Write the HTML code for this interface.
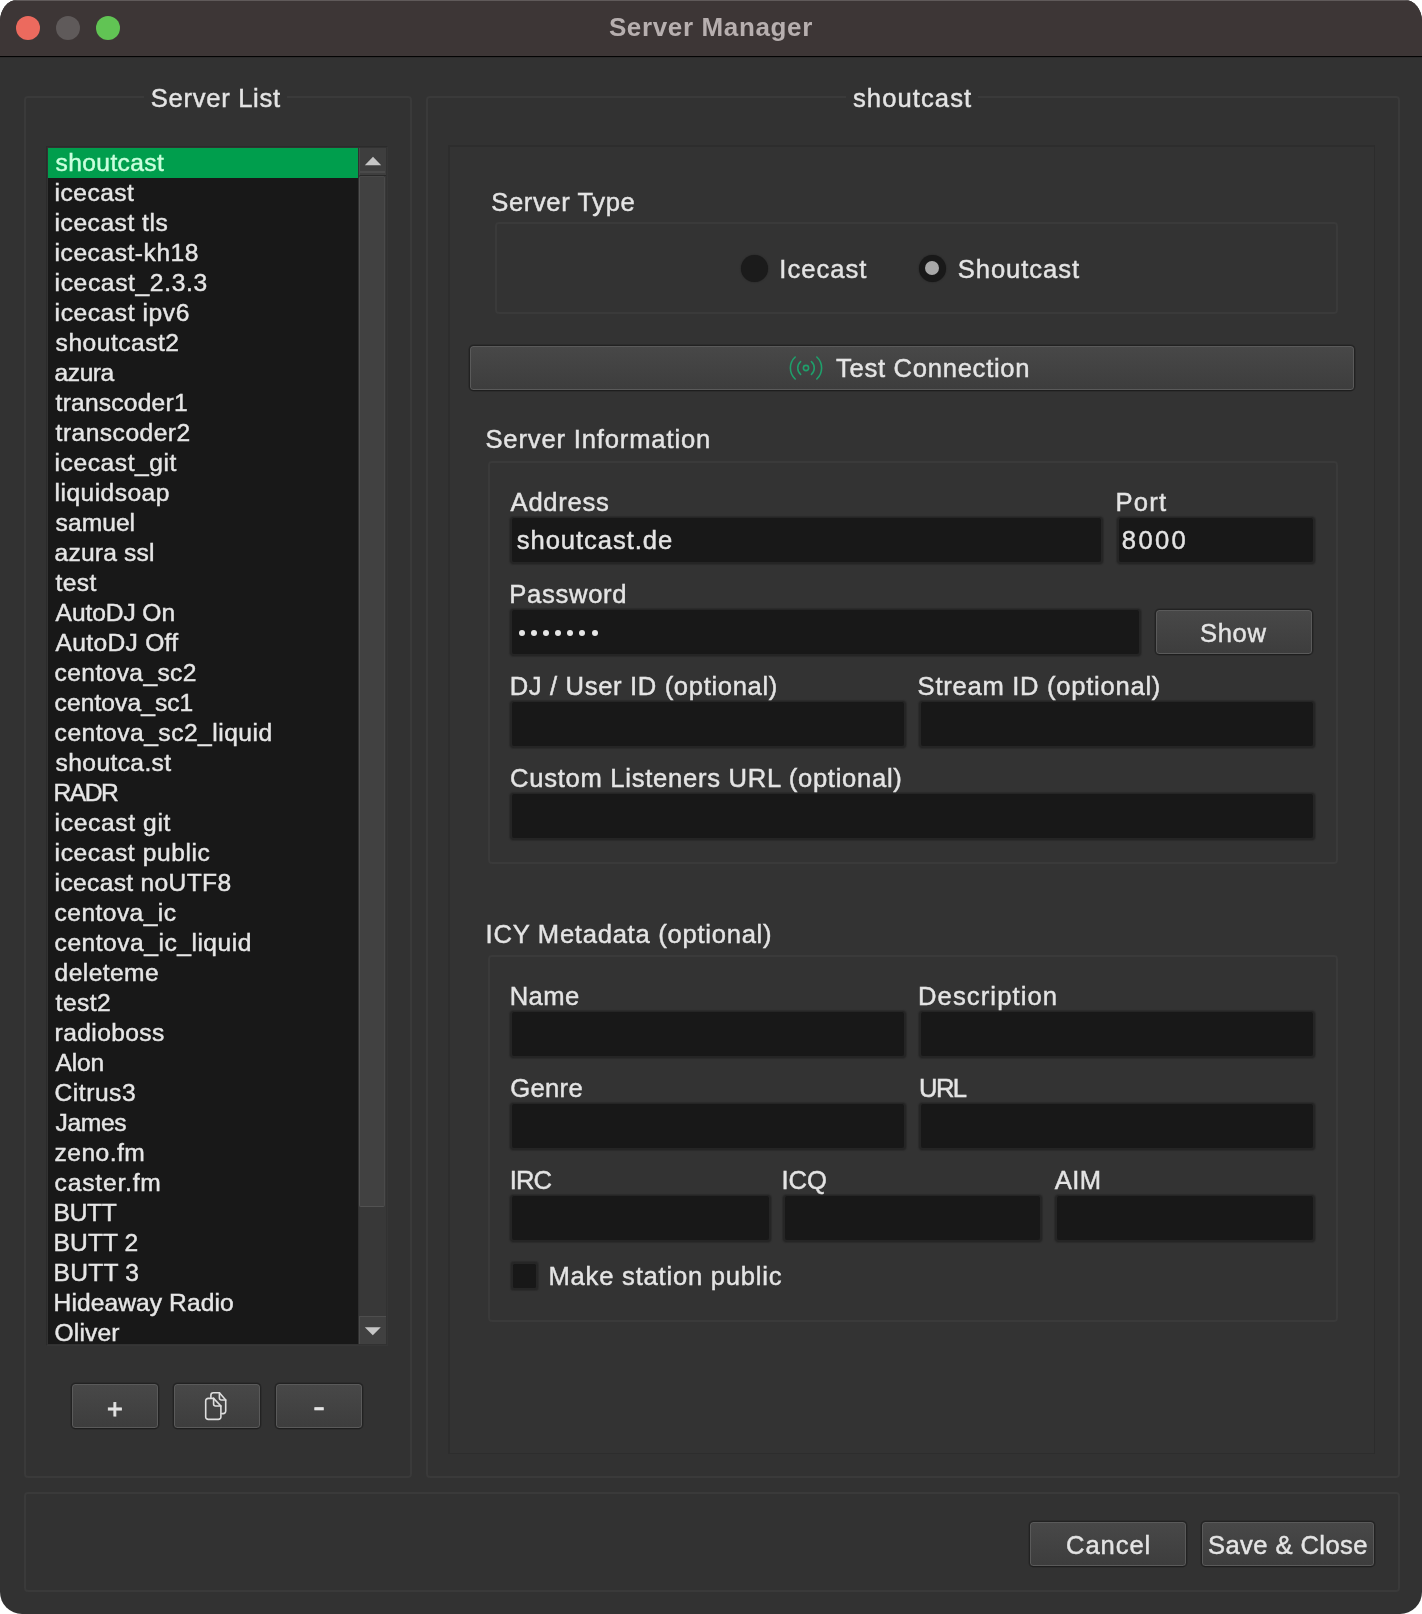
<!DOCTYPE html>
<html lang="en"><head><meta charset="utf-8"><title>Server Manager</title>
<style>
html,body{margin:0;padding:0;background:#fff;}
body{width:1422px;height:1614px;overflow:hidden;position:relative;font-family:"Liberation Sans",sans-serif;}
#win{position:absolute;left:0;top:0;width:1422px;height:1614px;background:#323232;border-radius:17px 17px 22px 22px / 21px 21px 22px 22px;overflow:hidden;}
#win div{position:absolute;box-sizing:border-box;}
#txt{left:0;top:0;width:1422px;height:1614px;will-change:transform;}
#tb{left:0;top:0;width:1422px;height:57px;background:#3d3636;border-top:1px solid #605a5a;border-bottom:1px solid #040404;}
#tb2{left:0;top:57px;width:1422px;height:1px;background:#2c2c2c;}
.tl{width:24px;height:24px;border-radius:50%;top:16px;}
.t{white-space:nowrap;-webkit-text-stroke:0.45px;font-size:26px;line-height:30px;height:30px;color:#e4e4e4;}
.frame{border:2px solid #3a3a3a;border-radius:4px;}
.inp{background:#181818;border:2px solid #252525;border-top-width:1.5px;border-radius:4px;height:47.5px;box-shadow:0 0 1px 0.5px #2b2b2b;}
.btn{border-radius:4.5px;background:linear-gradient(#484848,#3d3d3d);border:1px solid #222;border-bottom-color:#1e1e1e;box-shadow:inset 0 0 0 1px #5a5a5a,0 0 0 0.5px #272727;}
#listbg{left:48px;top:148px;width:310px;height:1196px;background:#181818;}
#list{left:48px;top:148px;width:310px;height:1196px;overflow:hidden;will-change:transform;}
#list .row{left:0;width:310px;height:30px;}
#list .t{color:#e6e6e6;}
</style></head><body><div id="win">

<div id="tb"></div><div id="tb2"></div>
<div class="tl" style="left:16px;background:#ec6a5e;"></div>
<div class="tl" style="left:56px;background:#5f5a5a;"></div>
<div class="tl" style="left:96px;background:#61c454;"></div>
<div class="frame" style="left:24px;top:96px;width:388px;height:1382px;"></div>
<div class="frame" style="left:426px;top:96px;width:974px;height:1382px;"></div>
<div class="frame" style="left:24px;top:1492px;width:1376px;height:100px;"></div>
<div style="left:448px;top:145px;width:927px;height:1308.5px;background:#333333;border:2px solid #2d2d2d;border-right:1.2px solid #2c2c2c;border-bottom:1.2px solid #2d2d2d;"></div>
<div class="frame" style="left:495px;top:222px;width:843px;height:92px;"></div>
<div class="frame" style="left:488px;top:461px;width:850px;height:403px;"></div>
<div class="frame" style="left:488px;top:955px;width:850px;height:367px;"></div>
<div style="left:144px;top:92px;width:143px;height:10px;background:#323232;"></div>
<div style="left:846px;top:92px;width:132px;height:10px;background:#323232;"></div>
<div id="listbg"><div class="row" style="top:0;left:0;width:310px;height:30px;background:#009e4d;"></div></div>
<div id="list">
<div class="t" style="left:7.60px;top:-0.10px;letter-spacing:0.371px;font-size:24.6px;color:#c9ffdd;">shoutcast</div>
<div class="t" style="left:6.60px;top:29.90px;letter-spacing:0.465px;font-size:24.6px;">icecast</div>
<div class="t" style="left:6.60px;top:59.90px;letter-spacing:0.513px;font-size:24.6px;">icecast tls</div>
<div class="t" style="left:6.60px;top:89.90px;letter-spacing:0.529px;font-size:24.6px;">icecast-kh18</div>
<div class="t" style="left:6.60px;top:119.90px;letter-spacing:0.630px;font-size:24.6px;">icecast_2.3.3</div>
<div class="t" style="left:6.60px;top:149.90px;letter-spacing:0.571px;font-size:24.6px;">icecast ipv6</div>
<div class="t" style="left:7.60px;top:179.90px;letter-spacing:0.492px;font-size:24.6px;">shoutcast2</div>
<div class="t" style="left:6.60px;top:209.90px;letter-spacing:-0.461px;font-size:24.6px;">azura</div>
<div class="t" style="left:7.60px;top:239.90px;letter-spacing:0.210px;font-size:24.6px;">transcoder1</div>
<div class="t" style="left:7.60px;top:269.90px;letter-spacing:0.470px;font-size:24.6px;">transcoder2</div>
<div class="t" style="left:6.60px;top:299.90px;letter-spacing:0.554px;font-size:24.6px;">icecast_git</div>
<div class="t" style="left:6.60px;top:329.90px;letter-spacing:0.447px;font-size:24.6px;">liquidsoap</div>
<div class="t" style="left:7.60px;top:359.90px;letter-spacing:0.037px;font-size:24.6px;">samuel</div>
<div class="t" style="left:6.60px;top:389.90px;letter-spacing:0.194px;font-size:24.6px;">azura ssl</div>
<div class="t" style="left:7.60px;top:419.90px;letter-spacing:0.331px;font-size:24.6px;">test</div>
<div class="t" style="left:7.60px;top:449.90px;letter-spacing:-0.102px;font-size:24.6px;">AutoDJ On</div>
<div class="t" style="left:7.60px;top:479.90px;letter-spacing:0.300px;font-size:24.6px;">AutoDJ Off</div>
<div class="t" style="left:6.60px;top:509.90px;letter-spacing:0.379px;font-size:24.6px;">centova_sc2</div>
<div class="t" style="left:6.60px;top:539.90px;letter-spacing:0.059px;font-size:24.6px;">centova_sc1</div>
<div class="t" style="left:6.60px;top:569.90px;letter-spacing:0.493px;font-size:24.6px;">centova_sc2_liquid</div>
<div class="t" style="left:7.60px;top:599.90px;letter-spacing:0.381px;font-size:24.6px;">shoutca.st</div>
<div class="t" style="left:5.60px;top:629.90px;letter-spacing:-1.508px;font-size:24.6px;">RADR</div>
<div class="t" style="left:6.60px;top:659.90px;letter-spacing:0.638px;font-size:24.6px;">icecast git</div>
<div class="t" style="left:6.60px;top:689.90px;letter-spacing:0.582px;font-size:24.6px;">icecast public</div>
<div class="t" style="left:6.60px;top:719.90px;letter-spacing:0.328px;font-size:24.6px;">icecast noUTF8</div>
<div class="t" style="left:6.60px;top:749.90px;letter-spacing:0.424px;font-size:24.6px;">centova_ic</div>
<div class="t" style="left:6.60px;top:779.90px;letter-spacing:0.506px;font-size:24.6px;">centova_ic_liquid</div>
<div class="t" style="left:6.60px;top:809.90px;letter-spacing:0.415px;font-size:24.6px;">deleteme</div>
<div class="t" style="left:7.60px;top:839.90px;letter-spacing:0.465px;font-size:24.6px;">test2</div>
<div class="t" style="left:6.60px;top:869.90px;letter-spacing:0.382px;font-size:24.6px;">radioboss</div>
<div class="t" style="left:7.60px;top:899.90px;letter-spacing:-0.249px;font-size:24.6px;">Alon</div>
<div class="t" style="left:6.60px;top:929.90px;letter-spacing:0.513px;font-size:24.6px;">Citrus3</div>
<div class="t" style="left:7.60px;top:959.90px;letter-spacing:-0.360px;font-size:24.6px;">James</div>
<div class="t" style="left:6.60px;top:989.90px;letter-spacing:0.434px;font-size:24.6px;">zeno.fm</div>
<div class="t" style="left:6.60px;top:1019.90px;letter-spacing:0.802px;font-size:24.6px;">caster.fm</div>
<div class="t" style="left:5.60px;top:1049.90px;letter-spacing:-0.362px;font-size:24.6px;">BUTT</div>
<div class="t" style="left:5.60px;top:1079.90px;letter-spacing:0.071px;font-size:24.6px;">BUTT 2</div>
<div class="t" style="left:5.60px;top:1109.90px;letter-spacing:0.231px;font-size:24.6px;">BUTT 3</div>
<div class="t" style="left:5.60px;top:1139.90px;letter-spacing:0.076px;font-size:24.6px;">Hideaway Radio</div>
<div class="t" style="left:6.60px;top:1169.90px;letter-spacing:0.134px;font-size:24.6px;">Oliver</div>
</div>
<div style="left:46px;top:146px;width:342px;height:1200px;border:1.5px solid #2b2b2b;border-bottom-color:#363636;border-right-color:#363636;"></div>
<div style="left:358px;top:148px;width:28px;height:1196px;background:#383838;border-left:1px solid #303030;"></div>
<div style="left:359px;top:148px;width:27px;height:28px;background:#3e3e3e;border-left:1px solid #4a4a4a;border-bottom:1px solid #292929;"></div>
<div style="left:359px;top:171px;width:26px;height:2px;background:#4a4a4a;"></div>
<div style="left:359px;top:176px;width:26px;height:1031px;background:#414141;border:1px solid #525252;border-top-color:#484848;border-right-color:#4a4a4a;border-radius:2px;"></div>
<div style="left:359px;top:1316px;width:27px;height:28px;background:#404040;border-top:1px solid #4e4e4e;border-left:1px solid #4b4b4b;"></div>
<svg style="position:absolute;left:358px;top:148px" width="28" height="28" viewBox="0 0 28 28"><polygon points="15,8.7 23.2,17.3 6.8,17.3" fill="#c6c6c6"/></svg>
<svg style="position:absolute;left:358px;top:1316px" width="28" height="28" viewBox="0 0 28 28"><polygon points="6.8,11.2 22.8,11.2 14.8,19.2" fill="#c6c6c6"/></svg>
<div class="btn" style="left:71px;top:1383px;width:88px;height:46px;"></div>
<div class="btn" style="left:173px;top:1383px;width:88px;height:46px;"></div>
<div class="btn" style="left:275px;top:1383px;width:88px;height:46px;"></div>
<svg style="position:absolute;left:200px;top:1388px" width="32" height="36" viewBox="0 0 32 36" fill="none" stroke="#dedede" stroke-width="1.6" stroke-linejoin="round" stroke-linecap="round">
<path d="M10.9 9.6 V7.3 a2.5 2.5 0 0 1 2.5 -2.5 H19.4 L25.7 12 V23.1 a2.5 2.5 0 0 1 -2.5 2.5 H21.8"/>
<path d="M19.4 4.8 V10 a2 2 0 0 0 2 2 H25.7"/>
<path d="M8.2 10.4 H13.6 L20.9 18 V28.9 a2.5 2.5 0 0 1 -2.5 2.5 H8.2 a2.5 2.5 0 0 1 -2.5 -2.5 V12.9 a2.5 2.5 0 0 1 2.5 -2.5 z"/>
<path d="M13.6 10.4 V16 a2 2 0 0 0 2 2 H20.9"/>
</svg>
<div style="left:741px;top:254.5px;width:27px;height:27px;border-radius:50%;background:#1b1b1b;box-shadow:0 0 1.5px #1b1b1b;"></div>
<div style="left:918.5px;top:254.5px;width:27px;height:27px;border-radius:50%;background:#191919;box-shadow:0 0 1.5px #191919;"></div>
<div style="left:925px;top:261px;width:14px;height:14px;border-radius:50%;background:#a8a8a8;"></div>
<div class="btn" style="left:469px;top:345px;width:886px;height:46px;"></div>
<svg style="position:absolute;left:786px;top:352px" width="40" height="32" viewBox="0 0 40 32" fill="none" stroke="#1f9f6b" stroke-width="1.6" stroke-linecap="round">
<circle cx="20" cy="16" r="2.6"/>
<path d="M14.6 9.6 a8.6 8.6 0 0 0 0 12.8"/>
<path d="M25.4 9.6 a8.6 8.6 0 0 1 0 12.8"/>
<path d="M9.2 5 a15 15 0 0 0 0 22"/>
<path d="M30.8 5 a15 15 0 0 1 0 22"/>
</svg>
<div class="inp" style="left:509.5px;top:516.5px;width:593px;"></div>
<div class="inp" style="left:1116.5px;top:516.5px;width:198px;"></div>
<div class="inp" style="left:509.5px;top:608.5px;width:631px;"></div>
<div class="inp" style="left:509.5px;top:700.5px;width:396px;"></div>
<div class="inp" style="left:918.5px;top:700.5px;width:396px;"></div>
<div class="inp" style="left:509.5px;top:792.5px;width:805px;"></div>
<div class="inp" style="left:509.5px;top:1010.5px;width:396px;"></div>
<div class="inp" style="left:918.5px;top:1010.5px;width:396px;"></div>
<div class="inp" style="left:509.5px;top:1102.5px;width:396px;"></div>
<div class="inp" style="left:918.5px;top:1102.5px;width:396px;"></div>
<div class="inp" style="left:509.5px;top:1194.5px;width:261px;"></div>
<div class="inp" style="left:782.5px;top:1194.5px;width:259px;"></div>
<div class="inp" style="left:1054.5px;top:1194.5px;width:260px;"></div>
<div style="left:519.05px;top:630.3px;width:6px;height:6px;border-radius:50%;background:#e6e6e6;"></div>
<div style="left:531.00px;top:630.3px;width:6px;height:6px;border-radius:50%;background:#e6e6e6;"></div>
<div style="left:543.00px;top:630.3px;width:6px;height:6px;border-radius:50%;background:#e6e6e6;"></div>
<div style="left:555.00px;top:630.3px;width:6px;height:6px;border-radius:50%;background:#e6e6e6;"></div>
<div style="left:567.00px;top:630.3px;width:6px;height:6px;border-radius:50%;background:#e6e6e6;"></div>
<div style="left:579.00px;top:630.3px;width:6px;height:6px;border-radius:50%;background:#e6e6e6;"></div>
<div style="left:591.70px;top:630.3px;width:6px;height:6px;border-radius:50%;background:#e6e6e6;"></div>
<div class="btn" style="left:1155px;top:609px;width:158px;height:46px;"></div>
<div style="left:510.5px;top:1261.5px;width:27px;height:28px;background:#181818;border-radius:3.5px;border:2px solid #262626;box-shadow:0 0 1px 0.5px #2b2b2b;"></div>
<div class="btn" style="left:1029px;top:1521px;width:158px;height:46px;"></div>
<div class="btn" style="left:1201px;top:1521px;width:174px;height:46px;"></div>
<div id="txt">
<div class="t" style="left:608.90px;top:11.70px;letter-spacing:0.640px;font-size:26px;font-weight:bold;-webkit-text-stroke:0;color:#b7afaf;">Server Manager</div>
<div class="t" style="left:150.80px;top:83.10px;letter-spacing:0.699px;font-size:25.6px;">Server List</div>
<div class="t" style="left:853.00px;top:83.00px;letter-spacing:1.070px;font-size:25.6px;">shoutcast</div>
<div class="t" style="left:491.30px;top:187.00px;letter-spacing:0.596px;font-size:25.6px;">Server Type</div>
<div class="t" style="left:779.30px;top:254.00px;letter-spacing:0.988px;font-size:25.6px;">Icecast</div>
<div class="t" style="left:957.70px;top:253.80px;letter-spacing:0.949px;font-size:25.6px;">Shoutcast</div>
<div class="t" style="left:836.00px;top:353.40px;letter-spacing:0.715px;font-size:25.6px;">Test Connection</div>
<div class="t" style="left:485.40px;top:424.00px;letter-spacing:0.842px;font-size:25.6px;">Server Information</div>
<div class="t" style="left:510.60px;top:487.00px;letter-spacing:0.718px;font-size:25.6px;">Address</div>
<div class="t" style="left:1115.50px;top:487.00px;letter-spacing:1.224px;font-size:25.6px;">Port</div>
<div class="t" style="left:516.80px;top:525.00px;letter-spacing:0.937px;font-size:25.6px;">shoutcast.de</div>
<div class="t" style="left:1121.80px;top:525.00px;letter-spacing:2.366px;font-size:25.6px;">8000</div>
<div class="t" style="left:509.30px;top:579.00px;letter-spacing:0.694px;font-size:25.6px;">Password</div>
<div class="t" style="left:1200.00px;top:618.00px;letter-spacing:0.620px;font-size:25.6px;">Show</div>
<div class="t" style="left:509.70px;top:671.00px;letter-spacing:0.657px;font-size:25.6px;">DJ / User ID (optional)</div>
<div class="t" style="left:917.60px;top:671.00px;letter-spacing:0.722px;font-size:25.6px;">Stream ID (optional)</div>
<div class="t" style="left:510.00px;top:763.00px;letter-spacing:0.719px;font-size:25.6px;">Custom Listeners URL (optional)</div>
<div class="t" style="left:485.60px;top:918.70px;letter-spacing:0.733px;font-size:25.6px;">ICY Metadata (optional)</div>
<div class="t" style="left:509.70px;top:980.60px;letter-spacing:0.421px;font-size:25.6px;">Name</div>
<div class="t" style="left:918.00px;top:980.60px;letter-spacing:1.102px;font-size:25.6px;">Description</div>
<div class="t" style="left:510.20px;top:1072.60px;letter-spacing:0.325px;font-size:25.6px;">Genre</div>
<div class="t" style="left:919.00px;top:1072.60px;letter-spacing:-1.583px;font-size:25.6px;">URL</div>
<div class="t" style="left:509.70px;top:1164.60px;letter-spacing:-0.897px;font-size:25.6px;">IRC</div>
<div class="t" style="left:781.50px;top:1164.60px;letter-spacing:-0.047px;font-size:25.6px;">ICQ</div>
<div class="t" style="left:1054.80px;top:1164.60px;letter-spacing:0.409px;font-size:25.6px;">AIM</div>
<div class="t" style="left:548.50px;top:1261.20px;letter-spacing:0.778px;font-size:25.6px;">Make station public</div>
<div class="t" style="left:1066.00px;top:1530.00px;letter-spacing:0.924px;font-size:25.6px;">Cancel</div>
<div class="t" style="left:1208.00px;top:1530.00px;letter-spacing:0.407px;font-size:25.6px;">Save &amp; Close</div>
<div class="t" id="plus" style="-webkit-text-stroke:0.8px;left:105px;top:1393.5px;width:20px;text-align:center;font-size:27px;">+</div>
<div class="t" id="minus" style="-webkit-text-stroke:0.6px;left:308.5px;top:1391.6px;width:20px;text-align:center;font-size:29px;transform:scaleX(1.2);">-</div>
</div>
</div></body></html>
